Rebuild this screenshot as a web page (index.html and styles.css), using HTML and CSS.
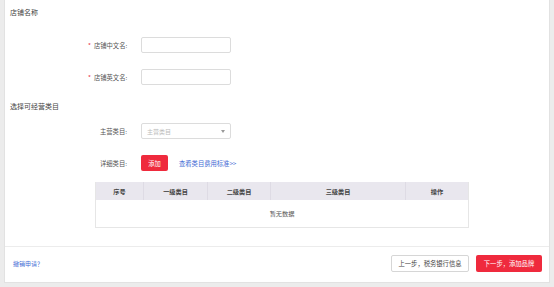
FILE: index.html
```html
<!DOCTYPE html>
<html lang="zh">
<head>
<meta charset="utf-8">
<link rel="stylesheet" href="styles.css">
</head>
<body>
<div class="card">
  <div class="content">
    <div class="section-title first">店铺名称</div>
    <div class="row r1">
      <div class="label"><span class="req">*</span>店铺中文名:</div>
      <div class="input"></div>
    </div>
    <div class="row r2">
      <div class="label"><span class="req">*</span>店铺英文名:</div>
      <div class="input"></div>
    </div>
    <div class="section-title second">选择可经营类目</div>
    <div class="row r3">
      <div class="label">主营类目:</div>
      <div class="input select"><span class="ph">主营类目</span><span class="arrow"></span></div>
    </div>
    <div class="row r4">
      <div class="label">详细类目:</div>
      <div class="btn-add">添加</div>
      <a class="link">查看类目费用标准&gt;&gt;</a>
    </div>
    <div class="table">
      <div class="thead">
        <div class="c c1">序号</div>
        <div class="c c2">一级类目</div>
        <div class="c c3">二级类目</div>
        <div class="c c4">三级类目</div>
        <div class="c c5">操作</div>
      </div>
      <div class="empty">暂无数据</div>
    </div>
  </div>
  <div class="footer">
    <a class="help">撤销申请？</a>
    <div class="actions">
      <div class="btn prev">上一步，税务银行信息</div>
      <div class="btn next">下一步，添加品牌</div>
    </div>
  </div>
</div>
</body>
</html>
```
FILE: styles.css
```css
html, body {
  margin: 0;
  padding: 0;
}
body {
  width: 554px;
  height: 287px;
  background: #ececec;
  font-family: "Noto Sans CJK SC", "Noto Sans", sans-serif;
  color: #333;
  overflow: hidden;
}
.card {
  margin: 0 4px;
  height: 283px;
  background: #fff;
  border-left: 1px solid #e2e2e2;
  border-right: 1px solid #e2e2e2;
  border-bottom: 1px solid #e2e2e2;
  box-sizing: border-box;
  display: flex;
  flex-direction: column;
}
.content {
  padding-left: 5px;
  height: 247px;
  flex-shrink: 0;
  border-bottom: 1px solid #ececec;
  box-sizing: border-box;
}
.section-title {
  font-size: 7px;
  line-height: 10px;
  color: #444;
}
.section-title.first { padding-top: 7px; }
.section-title.second { margin-top: 16px; }
.row {
  display: flex;
  align-items: center;
  height: 16px;
}
.r1 { margin-top: 20px; }
.r2 { margin-top: 16px; }
.r3 { margin-top: 12px; }
.r4 { margin-top: 16px; }
.label {
  width: 120px;
  box-sizing: border-box;
  text-align: left;
  padding-left: 78px;
  font-size: 6.3px;
  color: #555;
  white-space: nowrap;
}
.r3 .label, .r4 .label { padding-left: 90px; }
.req {
  color: #e8323f;
  margin-right: 3px;
}
.input {
  width: 90px;
  height: 16px;
  border: 1px solid #dcdcdc;
  border-radius: 2px;
  box-sizing: border-box;
  margin-left: 11px;
}
.select {
  display: flex;
  align-items: center;
  justify-content: space-between;
  padding: 0 5px;
}
.ph {
  font-size: 6px;
  color: #bbb;
}
.arrow {
  width: 0;
  height: 0;
  border-left: 2.5px solid transparent;
  border-right: 2.5px solid transparent;
  border-top: 3px solid #999;
}
.btn-add {
  margin-left: 11px;
  width: 27px;
  height: 16px;
  background: #ef2a3d;
  color: #fff;
  border-radius: 2px;
  font-size: 6.3px;
  display: flex;
  align-items: center;
  justify-content: center;
}
.link {
  margin-left: 11px;
  font-size: 6.3px;
  color: #3f6ad4;
}
.table {
  margin-top: 11px;
  margin-left: 85px;
  width: 374px;
  border: 1px solid #e6e6e6;
  border-top: none;
  box-sizing: border-box;
}
.thead {
  display: flex;
  height: 18px;
  background: #e9e7ee;
}
.c {
  font-size: 6.2px;
  font-weight: bold;
  color: #444;
  display: flex;
  align-items: center;
  justify-content: center;
  box-sizing: border-box;
  border-right: 1px solid #dedbe4;
}
.c1 { width: 48px; }
.c2 { width: 64px; }
.c3 { width: 63px; }
.c4 { width: 135px; }
.c5 { flex: 1; border-right: none; }
.empty {
  height: 27px;
  display: flex;
  align-items: center;
  justify-content: center;
  font-size: 6.2px;
  color: #555;
}
.footer {
  flex: 1;
  display: flex;
  align-items: center;
  justify-content: space-between;
  padding: 0 7px 3px 8px;
}
.help {
  font-size: 6px;
  color: #3f6ad4;
}
.actions {
  display: flex;
  gap: 7px;
}
.btn {
  height: 17px;
  border-radius: 2px;
  box-sizing: border-box;
  display: flex;
  align-items: center;
  justify-content: center;
  font-size: 6.3px;
}
.prev {
  width: 78px;
  border: 1px solid #d6d6d6;
  color: #444;
  background: #fff;
}
.next {
  width: 66px;
  background: #ef2a3d;
  color: #fff;
}
```
